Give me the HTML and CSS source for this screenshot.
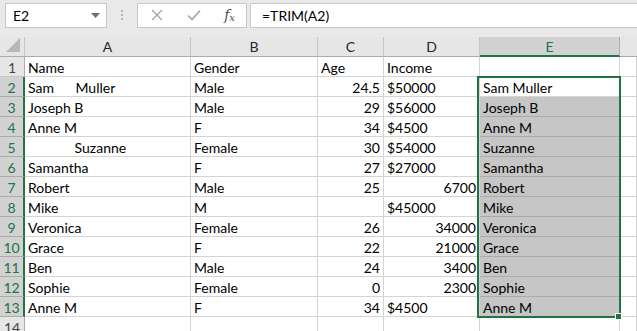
FILE: index.html
```html
<!DOCTYPE html>
<html>
    <head>
        <meta charset="UTF-8">
        <title>TRIM</title>
        <link rel="stylesheet" href="styles.css">
    </head>
    <body>
        <div class="formula-bar">
            <div class="name-box">
                <span>E2</span>
                <svg class="drop" width="9" height="5" viewBox="0 0 9 5"><path d="M0 0H9L4.5 5Z" fill="#707070"/></svg>
            </div>
            <div class="grip"><i></i><i></i><i></i></div>
            <div class="fx-buttons">
                <svg width="12" height="12" viewBox="0 0 12 12"><path d="M1 1L11 11M11 1L1 11" stroke="#a6a6a6" stroke-width="1.4" fill="none"/></svg>
                <svg width="14" height="12" viewBox="0 0 14 12"><path d="M1 6.5L5 10.5L13 1.5" stroke="#a6a6a6" stroke-width="1.6" fill="none"/></svg>
                <span class="fx">f<sub>x</sub></span>
            </div>
            <div class="formula">=TRIM(A2)</div>
        </div>

        <div class="sheet">
            <div class="corner"><svg width="14" height="14" viewBox="0 0 14 14"><path d="M14 0V14H0Z" fill="#b8b8b8"/></svg></div>
            <div class="col-head">A</div>
            <div class="col-head">B</div>
            <div class="col-head">C</div>
            <div class="col-head">D</div>
            <div class="col-head active">E</div>
            <div class="col-head last"></div>

            <div class="row-head">1</div>
            <div class="cell">Name</div><div class="cell">Gender</div><div class="cell">Age</div><div class="cell">Income</div><div class="cell"></div><div class="cell"></div>

            <div class="row-head sel">2</div>
            <div class="cell pre">Sam      Muller</div><div class="cell">Male</div><div class="cell num">24.5</div><div class="cell">$50000</div><div class="cell">Sam Muller</div><div class="cell"></div>

            <div class="row-head sel">3</div>
            <div class="cell">Joseph B</div><div class="cell">Male</div><div class="cell num">29</div><div class="cell">$56000</div><div class="cell hl">Joseph B</div><div class="cell"></div>

            <div class="row-head sel">4</div>
            <div class="cell">Anne M</div><div class="cell">F</div><div class="cell num">34</div><div class="cell">$4500</div><div class="cell hl">Anne M</div><div class="cell"></div>

            <div class="row-head sel">5</div>
            <div class="cell pre">             Suzanne</div><div class="cell">Female</div><div class="cell num">30</div><div class="cell">$54000</div><div class="cell hl">Suzanne</div><div class="cell"></div>

            <div class="row-head sel">6</div>
            <div class="cell">Samantha</div><div class="cell">F</div><div class="cell num">27</div><div class="cell">$27000</div><div class="cell hl">Samantha</div><div class="cell"></div>

            <div class="row-head sel">7</div>
            <div class="cell">Robert</div><div class="cell">Male</div><div class="cell num">25</div><div class="cell num">6700</div><div class="cell hl">Robert</div><div class="cell"></div>

            <div class="row-head sel">8</div>
            <div class="cell">Mike</div><div class="cell">M</div><div class="cell"></div><div class="cell">$45000</div><div class="cell hl">Mike</div><div class="cell"></div>

            <div class="row-head sel">9</div>
            <div class="cell">Veronica</div><div class="cell">Female</div><div class="cell num">26</div><div class="cell num">34000</div><div class="cell hl">Veronica</div><div class="cell"></div>

            <div class="row-head sel">10</div>
            <div class="cell">Grace</div><div class="cell">F</div><div class="cell num">22</div><div class="cell num">21000</div><div class="cell hl">Grace</div><div class="cell"></div>

            <div class="row-head sel">11</div>
            <div class="cell">Ben</div><div class="cell">Male</div><div class="cell num">24</div><div class="cell num">3400</div><div class="cell hl">Ben</div><div class="cell"></div>

            <div class="row-head sel">12</div>
            <div class="cell">Sophie</div><div class="cell">Female</div><div class="cell num">0</div><div class="cell num">2300</div><div class="cell hl">Sophie</div><div class="cell"></div>

            <div class="row-head sel">13</div>
            <div class="cell">Anne M</div><div class="cell">F</div><div class="cell num">34</div><div class="cell">$4500</div><div class="cell hl">Anne M</div><div class="cell"></div>

            <div class="row-head">14</div>
            <div class="cell"></div><div class="cell"></div><div class="cell"></div><div class="cell"></div><div class="cell"></div><div class="cell"></div>

            <div class="selection"></div>
            <div class="fill-handle"></div>
        </div>
    </body>
</html>
```

FILE: styles.css
```css
html, body {
    margin: 0;
    padding: 0;
    background-color: #ffffff;
    font-family: Lato, "Liberation Sans", sans-serif;
    font-size: 14px;
    color: #000000;
    overflow: hidden;
}

.formula-bar {
    display: flex;
    align-items: center;
    height: 37px;
    padding: 0 0 7px 5px;
    box-sizing: border-box;
    background-color: #e9e9e9;
}

.name-box {
    display: flex;
    align-items: center;
    justify-content: space-between;
    width: 102px;
    height: 25px;
    box-sizing: border-box;
    padding: 0 6px 0 7px;
    background-color: #ffffff;
    border: 1px solid #c8c8c8;
}

.grip {
    display: flex;
    flex-direction: column;
    gap: 2px;
    margin: 0 14px 0 14px;
}

.grip i {
    display: block;
    width: 2px;
    height: 2px;
    background-color: #b4b4b4;
}

.fx-buttons {
    display: flex;
    align-items: center;
    justify-content: space-between;
    width: 110px;
    height: 25px;
    box-sizing: border-box;
    padding: 0 11px 0 13px;
    background-color: #ffffff;
    border: 1px solid #c8c8c8;
}

.fx {
    font-family: "DejaVu Serif", "Liberation Serif", serif;
    font-style: italic;
    font-size: 14px;
    color: #505050;
}

.fx sub {
    font-size: 10px;
    vertical-align: -1px;
}

.formula {
    flex: 1;
    height: 25px;
    line-height: 24px;
    box-sizing: border-box;
    margin-left: 3px;
    padding-left: 11px;
    background-color: #ffffff;
    border: 1px solid #c8c8c8;
    border-right: none;
}

.sheet {
    position: relative;
    display: grid;
    grid-template-columns: 25px 166px 127px 66px 96px 140px 1fr;
    grid-auto-rows: 20px;
}

.corner {
    display: flex;
    align-items: flex-end;
    justify-content: flex-end;
    padding: 0 4px 4px 0;
    background-color: #e6e6e6;
    border-right: 1px solid #c6c6c6;
    border-bottom: 1px solid #ababab;
}

.col-head {
    background-color: #e6e6e6;
    border-right: 1px solid #c6c6c6;
    border-bottom: 1px solid #ababab;
    text-align: center;
    line-height: 20px;
    color: #262626;
}

.col-head.active {
    background-color: #d2d2d2;
    color: #217346;
    border-bottom: 2px solid #217346;
    border-right-color: #ababab;
}

.col-head.last {
    border-right: none;
}

.row-head {
    background-color: #e6e6e6;
    border-right: 1px solid #ababab;
    border-bottom: 1px solid #c6c6c6;
    text-align: center;
    line-height: 21px;
    color: #444444;
}

.row-head.sel {
    background-color: #d2d2d2;
    color: #217346;
    border-right: 2px solid #217346;
    border-bottom-color: #ababab;
}

.cell {
    border-right: 1px solid #d4d4d4;
    border-bottom: 1px solid #d4d4d4;
    padding: 0 3px;
    line-height: 21px;
    white-space: nowrap;
    overflow: visible;
}

.cell.num {
    text-align: right;
}

.cell.pre {
    white-space: pre;
}

.cell.hl {
    background-color: #c6c6c6;
    border-right-color: #ababab;
    border-bottom-color: #ababab;
}

.selection {
    position: absolute;
    left: 477px;
    top: 39px;
    width: 140px;
    height: 238px;
    border: 2px solid #217346;
    pointer-events: none;
}

.fill-handle {
    position: absolute;
    left: 615px;
    top: 276px;
    width: 5px;
    height: 5px;
    background-color: #217346;
    border: 1px solid #ffffff;
}
```
